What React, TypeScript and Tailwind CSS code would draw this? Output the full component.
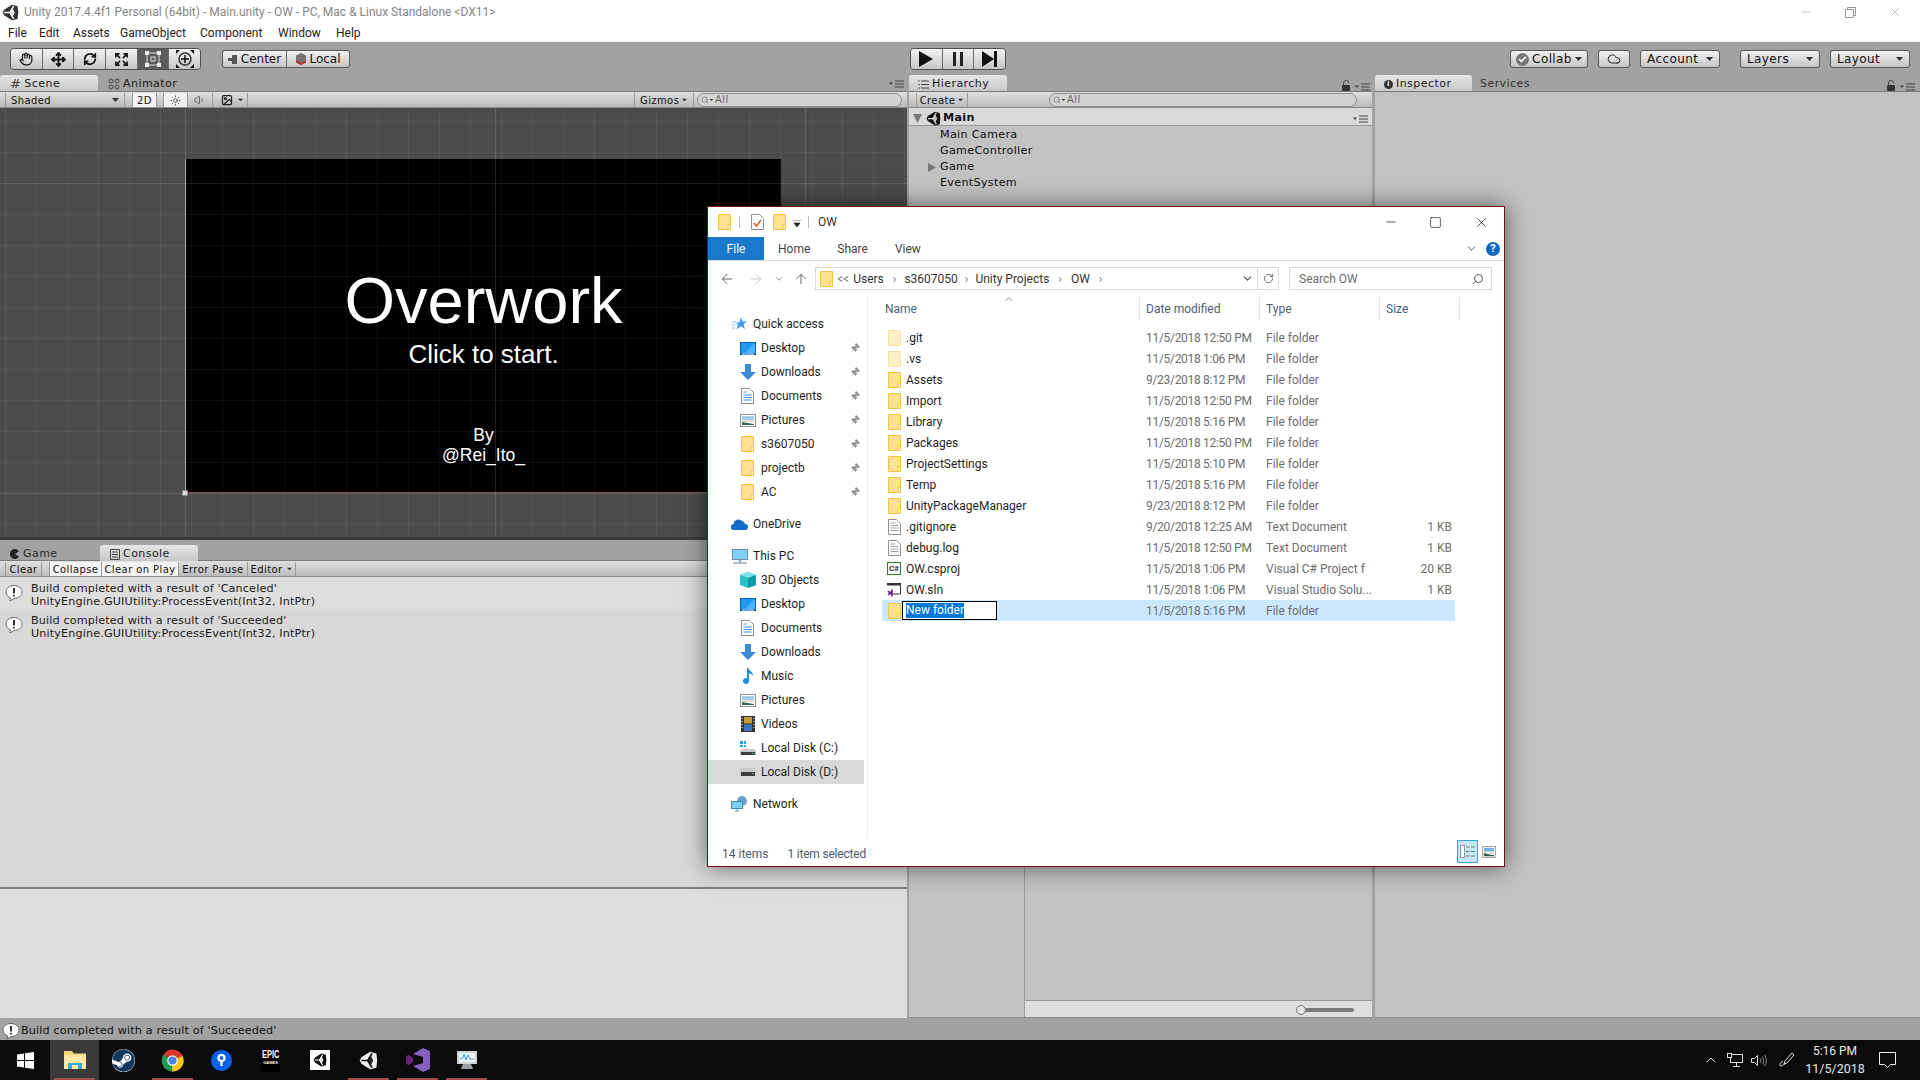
import { ReactNode } from 'react';
import { ArrowLeft, ArrowRight, ArrowUp, ChevronDown, ChevronUp, Expand, Hand, Move, RefreshCw, RotateCw, Search, Minus, Square, X, Cloud, Check, Pin, Volume1, Sun, Image } from 'lucide-react';
import { FaSteam } from 'react-icons/fa';

const Caret = ({ className = '' }: { className?: string }) => (
  <svg width="7" height="4" viewBox="0 0 7 4" className={className}><path d="M0 0h7L3.5 4z" fill="#333" /></svg>
);

const PanelMenu = () => (
  <svg width="15" height="8" viewBox="0 0 15 8">
    <path d="M0 2.5h4L2 5z" fill="#444" />
    <path d="M6 1h9M6 4h9M6 7h9" stroke="#444" strokeWidth="1" />
  </svg>
);

const PadLock = () => (
  <svg width="8" height="11" viewBox="0 0 8 11">
    <path d="M1.5 5V3a2.5 2.5 0 0 1 5 0" fill="none" stroke="#444" strokeWidth="1" />
    <rect x="0" y="5" width="8" height="6" rx="1" fill="#333" />
  </svg>
);

const UnityMark = ({ size = 16, color = '#111', cut = '#fff' }: { size?: number; color?: string; cut?: string }) => (
  <svg width={size} height={size} viewBox="0 0 24 24">
    <path d="M14 1l8 2 1 9-1 9-8 2-11-7-2-4 2-4z" fill={color} />
    <path d="M11 12L16.5 3M11 12l5.5 9M11 12H3" stroke={cut} strokeWidth="2" fill="none" />
    <path d="M11 12l4-6 3 6-3 6z" fill={cut} opacity="0.85" />
  </svg>
);

const GalleryIcon = () => (
  <svg width="14" height="12" viewBox="0 0 15 13">
    <rect x="0.5" y="0.5" width="14" height="12" fill="#fff" stroke="#9d9d9d" />
    <rect x="2" y="2" width="11" height="4" fill="#78aee8" />
    <rect x="2" y="6" width="11" height="2" fill="#cfe0cc" />
    <path d="M2 11V7.5l5 1.5 6 1v1z" fill="#2f5d49" />
  </svg>
);

const PlainDoc = () => (
  <svg width="13" height="16" viewBox="0 0 13 16">
    <path d="M.5.5h8l4 4v11H.5z" fill="#fff" stroke="#8f8f8f" />
    <path d="M2.5 4h5M2.5 6.5h8M2.5 9h8M2.5 11.500h8" stroke="#a0a0a0" />
  </svg>
);

const FolderIcon = ({ faded = false }: { faded?: boolean }) => (
  <svg width="13" height="16" viewBox="0 0 13 16" className={faded ? 'opacity-50' : ''}>
    <path d="M.5.5h12v15H.5z" fill="#fee291" stroke="#eec548" />
    <path d="M10 10.5h2.5v5H10z" fill="#fff3c4" stroke="#eec548" />
  </svg>
);

const SidebarGlyphs: Record<string, ReactNode> = {
  star: (
    <svg width="15" height="14" viewBox="0 0 15 14">
      <path d="M9 0l1.6 4.500H15l-3.500 2.800L13 12 9 9.200 4.600 12.500 6 7.500 3.500 5.500h4z" fill="#3a9bf0" />
      <path d="M0 5h4M0 8h3M0 11h3" stroke="#7fc0f4" />
    </svg>
  ),
  desktop: (
    <svg width="16" height="13" viewBox="0 0 16 13">
      <rect width="16" height="13" fill="#0a5fb5" />
      <path d="M1 1h14v10H1z" fill="#1e9bf0" />
      <path d="M15 1v10H5z" fill="#4db4f5" />
      <path d="M2 12h12" stroke="#d8ecfb" />
    </svg>
  ),
  downloads: (
    <svg width="16" height="16" viewBox="0 0 16 16">
      <path d="M5 0h6v8h5l-8 8-8-8h5z" fill="#3a8ad8" />
    </svg>
  ),
  documents: (
    <svg width="13" height="16" viewBox="0 0 13 16">
      <path d="M.5.5h8l4 4v11H.5z" fill="#fff" stroke="#8b8b8b" />
      <path d="M2.5 4h3M2.5 7h8M2.5 9.500h8M2.5 12h8" stroke="#3f87cf" />
    </svg>
  ),
  pictures: (
    <svg width="16" height="13" viewBox="0 0 16 13">
      <rect x="0.5" y="0.5" width="15" height="12" fill="#fff" stroke="#8f8f8f" />
      <rect x="2" y="2" width="12" height="4" fill="#a5cdee" />
      <rect x="2" y="6" width="12" height="2" fill="#d8e3cf" />
      <path d="M2 11V8l6 1 6 1v1z" fill="#35634f" />
    </svg>
  ),
  onedrive: (
    <svg width="17" height="12" viewBox="0 0 17 12">
      <path d="M3 12a3 3 0 0 1-.5-6A5 5 0 0 1 11 3a3.500 3.500 0 0 1 3 3 3 3 0 0 1 0 6z" fill="#0f6cc8" />
    </svg>
  ),
  pc: (
    <svg width="16" height="15" viewBox="0 0 16 15">
      <rect x="0.5" y="0.5" width="15" height="10" fill="#7fd0f7" stroke="#6b8fa6" />
      <path d="M6.5 11h3v2h-3z" fill="#9aa9b3" />
      <path d="M1 14h14" stroke="#9aa9b3" strokeWidth="1.5" />
    </svg>
  ),
  cube: (
    <svg width="16" height="16" viewBox="0 0 16 16">
      <path d="M8 0l8 3v10l-8 3-8-3V3z" fill="#27c0c8" />
      <path d="M8 0l8 3-8 3-8-3z" fill="#7be2e6" />
      <path d="M8 6l8-3v10l-8 3z" fill="#119aa8" />
    </svg>
  ),
  music: (
    <svg width="12" height="16" viewBox="0 0 12 16">
      <path d="M5 0h1.500c.5 3 5.500 4 4 8C10 6 8 5.500 7 5.500V13a3 3 0 1 1-2-2.800z" fill="#1f8fe6" />
    </svg>
  ),
  videos: (
    <svg width="14" height="16" viewBox="0 0 14 16">
      <rect width="14" height="16" fill="#333" />
      <rect x="3" y="1" width="8" height="6.5" fill="#c49a3c" />
      <rect x="3" y="8.5" width="8" height="6.5" fill="#3c74c4" />
      <path d="M1 2v1M1 5v1M1 8v1M1 11v1M13 2v1M13 5v1M13 8v1M13 11v1" stroke="#fff" />
    </svg>
  ),
  diskC: (
    <svg width="16" height="14" viewBox="0 0 16 14">
      <path d="M0 0h3v3H0zM4 0h2v3H4zM0 4h3v2H0zM4 4h2v2H4z" fill="#1ea7f0" />
      <path d="M2 8h12l2 2v4H0v-4z" fill="#c9c9c9" />
      <rect x="1" y="11" width="14" height="3" fill="#3d3d3d" />
      <rect x="12" y="12" width="1.5" height="1" fill="#5dd35d" />
    </svg>
  ),
  diskD: (
    <svg width="16" height="8" viewBox="0 0 16 8">
      <path d="M2 0h12l2 2v6H0V2z" fill="#c9c9c9" />
      <rect x="1" y="4" width="14" height="4" fill="#3d3d3d" />
      <rect x="12" y="5" width="1.5" height="1" fill="#5dd35d" />
    </svg>
  ),
  network: (
    <svg width="17" height="16" viewBox="0 0 17 16">
      <circle cx="11" cy="5" r="5" fill="#6f9fc9" />
      <rect x="0.5" y="5.5" width="11" height="7" fill="#7fd0f7" stroke="#4a86b2" />
      <path d="M4 15h4M6 13v2" stroke="#7d97a8" />
    </svg>
  ),
};

const sidebarRows = [
  { label: 'Quick access', icon: 'star', top: true },
  { label: 'Desktop', icon: 'desktop', pin: true },
  { label: 'Downloads', icon: 'downloads', pin: true },
  { label: 'Documents', icon: 'documents', pin: true },
  { label: 'Pictures', icon: 'pictures', pin: true },
  { label: 's3607050', icon: 'folder', pin: true },
  { label: 'projectb', icon: 'folder', pin: true },
  { label: 'AC', icon: 'folder', pin: true },
  { label: 'OneDrive', icon: 'onedrive', top: true, gap: true },
  { label: 'This PC', icon: 'pc', top: true, gap: true },
  { label: '3D Objects', icon: 'cube' },
  { label: 'Desktop', icon: 'desktop' },
  { label: 'Documents', icon: 'documents' },
  { label: 'Downloads', icon: 'downloads' },
  { label: 'Music', icon: 'music' },
  { label: 'Pictures', icon: 'pictures' },
  { label: 'Videos', icon: 'videos' },
  { label: 'Local Disk (C:)', icon: 'diskC' },
  { label: 'Local Disk (D:)', icon: 'diskD', selected: true },
  { label: 'Network', icon: 'network', top: true, gap: true },
];

const files = [
  { name: '.git', date: '11/5/2018 12:50 PM', type: 'File folder', size: '', icon: 'faded' },
  { name: '.vs', date: '11/5/2018 1:06 PM', type: 'File folder', size: '', icon: 'faded' },
  { name: 'Assets', date: '9/23/2018 8:12 PM', type: 'File folder', size: '', icon: 'folder' },
  { name: 'Import', date: '11/5/2018 12:50 PM', type: 'File folder', size: '', icon: 'folder' },
  { name: 'Library', date: '11/5/2018 5:16 PM', type: 'File folder', size: '', icon: 'folder' },
  { name: 'Packages', date: '11/5/2018 12:50 PM', type: 'File folder', size: '', icon: 'folder' },
  { name: 'ProjectSettings', date: '11/5/2018 5:10 PM', type: 'File folder', size: '', icon: 'folder' },
  { name: 'Temp', date: '11/5/2018 5:16 PM', type: 'File folder', size: '', icon: 'folder' },
  { name: 'UnityPackageManager', date: '9/23/2018 8:12 PM', type: 'File folder', size: '', icon: 'folder' },
  { name: '.gitignore', date: '9/20/2018 12:25 AM', type: 'Text Document', size: '1 KB', icon: 'doc' },
  { name: 'debug.log', date: '11/5/2018 12:50 PM', type: 'Text Document', size: '1 KB', icon: 'doc' },
  { name: 'OW.csproj', date: '11/5/2018 1:06 PM', type: 'Visual C# Project f', size: '20 KB', icon: 'csproj' },
  { name: 'OW.sln', date: '11/5/2018 1:06 PM', type: 'Visual Studio Solu...', size: '1 KB', icon: 'sln' },
];

const fileIcon = (kind: string) => {
  if (kind === 'faded') return <FolderIcon faded />;
  if (kind === 'folder') return <FolderIcon />;
  if (kind === 'doc') return <PlainDoc />;
  if (kind === 'csproj')
    return (
      <div className="w-[14px] h-[13px] border border-[#2f7d32] bg-white flex items-center justify-center text-[8px] leading-none font-bold text-[#333] -ml-[1px]">C#</div>
    );
  return (
    <svg width="14" height="14" viewBox="0 0 14 14" className="-ml-[1px]">
      <path d="M.5 1h13v10H6" fill="#fff" stroke="#333" />
      <rect x="0" y="0" width="14" height="2.5" fill="#333" />
      <path d="M1 8l4 4M1 12l4-4M5 6.500v7" stroke="#68217a" strokeWidth="1.6" fill="none" />
    </svg>
  );
};

const UnityButton = ({ children, className = '' }: { children: ReactNode; className?: string }) => (
  <div className={`flex items-center h-[18px] rounded-[3px] border border-[#5a5a5a] bg-linear-to-b from-[#f2f2f2] to-[#c4c4c4] text-[#111] ${className}`}>
    {children}
  </div>
);

const ToolCell = ({ children, active = false, last = false }: { children: ReactNode; active?: boolean; last?: boolean }) => (
  <div className={`flex-1 h-full flex items-center justify-center ${last ? '' : 'border-r border-[#6a6a6a]'} ${active ? 'bg-[#5c5c5c] text-white' : 'bg-linear-to-b from-[#f2f2f2] to-[#c6c6c6] text-[#111]'}`}>
    {children}
  </div>
);

const BarItem = ({ children, className = '' }: { children: ReactNode; className?: string }) => (
  <div className={`h-full flex items-center border-r border-[#9a9a9a] ${className}`}>{children}</div>
);

const SearchPill = ({ className = '' }: { className?: string }) => (
  <div className={`h-[14px] rounded-full border border-[#8f8f8f] bg-[#d4d4d4] flex items-center pl-[3px] text-[#666] text-[10px] leading-none ${className}`}>
    <Search size={8} strokeWidth={2} />
    <Caret className="scale-50 -ml-[1px]" />
    All
  </div>
);

const Toolbar = () => (
  <div className="h-[32px] flex items-start pt-[5px] pl-[10px] pr-[10px] text-[12px]">
    <div className="flex w-[191px] h-[22px] rounded-[4px] border border-[#4f4f4f] overflow-hidden">
      <ToolCell><Hand size={14} /></ToolCell>
      <ToolCell><Move size={15} strokeWidth={3} /></ToolCell>
      <ToolCell><RefreshCw size={14} strokeWidth={3} /></ToolCell>
      <ToolCell><Expand size={15} strokeWidth={2.5} /></ToolCell>
      <ToolCell active>
        <svg width="16" height="16" viewBox="0 0 16 16">
          <path d="M2 2h12v12H2z" fill="none" stroke="#ddd" />
          <path d="M0 0h4v4H0zM12 0h4v4h-4zM0 12h4v4H0zM12 12h4v4h-4z" fill="#eee" />
          <rect x="6" y="6" width="4" height="4" fill="none" stroke="#ddd" />
        </svg>
      </ToolCell>
      <ToolCell last>
        <svg width="18" height="18" viewBox="0 0 18 18">
          <circle cx="9" cy="9" r="6" fill="none" stroke="#333" strokeWidth="1.5" />
          <path d="M9 5v8M5 9h8" stroke="#111" strokeWidth="1.5" />
          <path d="M0 0h4L0 4zM18 0h-4l4 4zM0 18h4l-4-4zM18 18h-4l4-4z" fill="#111" />
        </svg>
      </ToolCell>
    </div>
    <UnityButton className="ml-[21px] mt-[2px] w-[128px]">
      <div className="w-[64px] h-full flex items-center justify-center gap-[3px] border-r border-[#6a6a6a]">
        <svg width="10" height="9" viewBox="0 0 10 9"><path d="M4 0h5v9H4zM0 3h4v3H0z" fill="#555" /></svg>
        Center
      </div>
      <div className="flex-1 h-full flex items-center justify-center gap-[2px]">
        <svg width="12" height="12" viewBox="0 0 12 12"><path d="M6 0l5 2.500v7L6 12 1 9.500v-7z" fill="#777" /><path d="M1 7l5 2.500L11 7v2.500L6 12 1 9.500z" fill="#b33c3c" /></svg>
        Local
      </div>
    </UnityButton>
    <div className="ml-[560px] flex h-[22px] w-[96px] rounded-[4px] border border-[#4f4f4f] overflow-hidden">
      <ToolCell><svg width="14" height="16" viewBox="0 0 14 16"><path d="M0 0l14 8-14 8z" fill="#111" /></svg></ToolCell>
      <ToolCell><svg width="10" height="14" viewBox="0 0 10 14"><path d="M0 0h3v14H0zM7 0h3v14H7z" fill="#222" /></svg></ToolCell>
      <ToolCell last><svg width="16" height="16" viewBox="0 0 16 16"><path d="M0 0l12 8-12 8zM12 0h3v16h-3z" fill="#111" /></svg></ToolCell>
    </div>
    <UnityButton className="ml-auto mt-[2px] w-[78px] justify-center gap-[3px] tracking-[0.4px]">
      <span className="w-[13px] h-[13px] rounded-full bg-[#777] flex items-center justify-center"><Check size={9} color="#fff" strokeWidth={4} /></span>
      Collab
      <Caret />
    </UnityButton>
    <UnityButton className="ml-[10px] mt-[2px] w-[32px] justify-center"><Cloud size={14} strokeWidth={1.5} /></UnityButton>
    <UnityButton className="ml-[10px] mt-[2px] w-[80px] justify-between px-[6px] tracking-[0.4px]">Account<Caret /></UnityButton>
    <UnityButton className="ml-[20px] mt-[2px] w-[80px] justify-between px-[6px] tracking-[0.4px]">Layers<Caret /></UnityButton>
    <UnityButton className="ml-[10px] mt-[2px] w-[80px] justify-between px-[6px] tracking-[0.4px]">Layout<Caret /></UnityButton>
  </div>
);

const Tab = ({ children, active = false, className = '' }: { children: ReactNode; active?: boolean; className?: string }) => (
  <div className={`h-[16px] pt-[2px] flex items-center gap-[3px] text-[11px] tracking-[0.45px] text-[#1a1a1a] ${active ? 'rounded-t-[3px] bg-linear-to-b from-[#e6e6e6] to-[#c8c8c8]' : ''} ${className}`}>
    {children}
  </div>
);

const SceneView = () => (
  <div className="relative h-[432px] bg-[#4b4b4b] overflow-hidden border-b-[3px] border-[#3c3c3c]">
    <div className="absolute left-[185px] top-[51px] w-[596px] h-[334px] bg-black border-l border-[#9a9a9a] border-b border-b-[#8a4a4a] flex flex-col items-center pt-[104px] text-white font-['Liberation_Sans',sans-serif]">
      <div className="text-[65px] leading-[75px]">Overwork</div>
      <div className="text-[26px] leading-[30px] mt-[1px]">Click to start.</div>
      <div className="text-[17.5px] leading-[20px] mt-[56px] text-center">By<br />@Rei_Ito_</div>
    </div>
    <div className="absolute inset-0 bg-[linear-gradient(to_right,rgba(255,255,255,0.05)_1px,transparent_1px),linear-gradient(to_bottom,rgba(255,255,255,0.05)_1px,transparent_1px)] bg-[length:31px_31px] bg-[position:5px_13px]" />
    <div className="absolute inset-0 bg-[linear-gradient(to_right,rgba(255,255,255,0.13)_1px,transparent_1px),linear-gradient(to_bottom,rgba(255,255,255,0.07)_1px,transparent_1px)] bg-[length:310px_310px] bg-[position:185px_75px]" />
    <div className="absolute left-[182px] top-[382px] w-[6px] h-[6px] border border-[#888] bg-[#ddd]" />
  </div>
);

const ConsoleIcon = () => (
  <svg width="18" height="18" viewBox="0 0 18 18">
    <path d="M9 1.500c4.500 0 8 2.800 8 6.500s-3.500 6.500-8 6.500l-4 2.500 .5-3.200C3 12.500 1 10.500 1 8c0-3.700 3.500-6.500 8-6.500z" fill="#fff" stroke="#666" />
    <path d="M9 4v5.500M9 11v1.500" stroke="#222" strokeWidth="1.8" />
  </svg>
);

const LogRow = ({ text, className }: { text: string; className: string }) => (
  <div className={`h-[32px] flex items-center pl-[5px] ${className}`}>
    <ConsoleIcon />
    <div className="ml-[8px] mt-[3px] text-[11.2px] leading-[13px] text-[#1a1a1a] tracking-[0.14px] whitespace-nowrap">
      {text}<br />UnityEngine.GUIUtility:ProcessEvent(Int32, IntPtr)
    </div>
  </div>
);

const LeftColumn = () => (
  <div className="w-[907px] flex flex-col">
    <div className="h-[17px] flex border-b border-[#7a7a7a]">
      <Tab active className="w-[98px] pl-[10px]"><span className="text-[13px] text-[#444]">#</span>Scene</Tab>
      <Tab className="ml-[10px]">
        <svg width="12" height="12" viewBox="0 0 12 12"><circle cx="3" cy="3" r="2" fill="none" stroke="#444" /><circle cx="9" cy="3" r="2" fill="none" stroke="#444" /><circle cx="3" cy="9" r="2" fill="none" stroke="#444" /><circle cx="9" cy="9" r="2" fill="none" stroke="#444" /></svg>
        Animator
      </Tab>
      <div className="ml-auto mr-[3px] mt-[5px]"><PanelMenu /></div>
    </div>
    <div className="h-[16px] pt-[1px] flex items-center bg-linear-to-b from-[#e0e0e0] to-[#b9b9b9] text-[10px] tracking-[0.4px] text-[#111] border-b border-[#8a8a8a]">
      <BarItem className="ml-[5px] w-[120px] px-[5px] justify-between border-l border-[#9a9a9a]">Shaded<Caret /></BarItem>
      <BarItem className="ml-[7px] w-[25px] justify-center bg-[#f4f4f4] border-l">2D</BarItem>
      <BarItem className="ml-[6px] w-[25px] justify-center bg-[#f0f0f0] border-l"><Sun size={11} color="#555" /></BarItem>
      <BarItem className="w-[25px] justify-center"><Volume1 size={12} color="#666" /></BarItem>
      <BarItem className="w-[35px] pl-[8px] gap-[4px]"><Image size={12} color="#222" strokeWidth={2.5} /><Caret className="scale-75" /></BarItem>
      <BarItem className="ml-auto w-[60px] justify-between px-[5px] border-l">Gizmos<Caret className="scale-75" /></BarItem>
      <SearchPill className="ml-[3px] mr-[5px] w-[205px]" />
    </div>
    <SceneView />
    <div className="h-[21px] pt-[5px] flex border-b border-[#7a7a7a]">
      <Tab className="w-[100px] pl-[10px] text-[#2a2a2a]">
        <svg width="10" height="10" viewBox="0 0 10 10"><path d="M9 2.200A5 5 0 1 0 9 7.800L5 5z" fill="#222" /></svg>
        Game
      </Tab>
      <Tab active className="w-[98px] pl-[10px]">
        <svg width="10" height="11" viewBox="0 0 10 11"><path d="M.5.5h9v10h-9zM2 3h6M2 5.500h6M2 8h6" fill="none" stroke="#444" /></svg>
        Console
      </Tab>
    </div>
    <div className="h-[16px] pt-[1px] flex items-center bg-linear-to-b from-[#e0e0e0] to-[#bcbcbc] text-[10px] tracking-[0.4px] text-[#111] border-b border-[#8a8a8a]">
      <BarItem className="ml-[5px] w-[37px] justify-center border-l">Clear</BarItem>
      <BarItem className="ml-[7px] w-[53px] justify-center bg-[#f4f4f4] border-l">Collapse</BarItem>
      <BarItem className="w-[77px] justify-center bg-[#f4f4f4]">Clear on Play</BarItem>
      <BarItem className="w-[69px] justify-center">Error Pause</BarItem>
      <BarItem className="w-[48px] justify-center gap-[3px]">Editor<Caret className="scale-75" /></BarItem>
    </div>
    <div className="flex-1 bg-[#d8d8d8]">
      <LogRow text="Build completed with a result of 'Canceled'" className="bg-[#dedede]" />
      <LogRow text="Build completed with a result of 'Succeeded'" className="bg-[#d8d8d8]" />
    </div>
    <div className="h-[131px] bg-[#dedede] border-t-2 border-[#7f7f7f]" />
  </div>
);

const MiddleColumn = () => (
  <div className="w-[463px] ml-[2px] flex flex-col">
    <div className="h-[17px] flex border-b border-[#7a7a7a]">
      <Tab active className="w-[98px] pl-[9px]">
        <svg width="11" height="9" viewBox="0 0 11 9"><path d="M3 1h8M3 4.500h8M3 8h8" stroke="#444" /><path d="M0 1h1.500M.5 4.500H2M.5 8H2" stroke="#444" /></svg>
        Hierarchy
      </Tab>
      <div className="ml-auto mr-[2px] mt-[4px] flex items-end gap-[5px]"><PadLock /><PanelMenu /></div>
    </div>
    <div className="h-[16px] pt-[1px] flex items-center bg-linear-to-b from-[#e0e0e0] to-[#b9b9b9] text-[10px] tracking-[0.4px] text-[#111] border-b border-[#8a8a8a]">
      <BarItem className="ml-[7px] w-[52px] justify-center gap-[2px] border-l">Create<Caret className="scale-75" /></BarItem>
      <SearchPill className="ml-[81px] w-[308px]" />
    </div>
    <div className="flex-1 bg-[#c2c2c2] flex flex-col text-[11.2px] tracking-[0.3px] text-[#111]">
      <div className="h-[18px] bg-[#d9d9d9] border-b border-[#9a9a9a] flex items-center pl-[4px] pt-[4px] font-bold">
        <svg width="9" height="9" viewBox="0 0 9 9"><path d="M0 0h9L4.500 9z" fill="#777" /></svg>
        <span className="ml-[4px] mr-[2px]"><UnityMark size={15} color="#111" cut="#d9d9d9" /></span>
        Main
        <div className="ml-auto mr-[4px]"><PanelMenu /></div>
      </div>
      <div className="h-[16px] mt-[1px] leading-[16px] pl-[31px]">Main Camera</div>
      <div className="h-[16px] leading-[16px] pl-[31px]">GameController</div>
      <div className="h-[16px] leading-[16px] pl-[19px] flex items-center gap-[4px]">
        <svg width="8" height="9" viewBox="0 0 8 9"><path d="M0 0l8 4.500L0 9z" fill="#777" /></svg>
        Game
      </div>
      <div className="h-[16px] leading-[16px] pl-[31px]">EventSystem</div>
    </div>
    <div className="h-[400px] mt-[2px] flex border-b border-[#8a8a8a]">
      <div className="w-[116px] bg-[#c2c2c2] border-r border-[#9a9a9a]" />
      <div className="flex-1 flex flex-col bg-[#c2c2c2]">
        <div className="flex-1" />
        <div className="h-[17px] pt-[1px] bg-[#dedede] border-t border-[#9a9a9a] flex items-center pl-[274px]">
          <div className="relative w-[55px] h-[4px] rounded-full bg-[#7a7a7a]">
            <div className="absolute -left-[3px] -top-[3px] w-[10px] h-[10px] rounded-full border border-[#777] bg-[#e4e4e4]" />
          </div>
        </div>
      </div>
    </div>
  </div>
);

const InspectorColumn = () => (
  <div className="flex-1 ml-[3px] flex flex-col">
    <div className="h-[17px] flex border-b border-[#7a7a7a]">
      <Tab active className="w-[97px] pl-[9px]">
        <span className="w-[9px] h-[9px] rounded-full bg-[#333] text-white text-[7px] leading-[9px] text-center font-bold">i</span>
        Inspector
      </Tab>
      <Tab className="ml-[8px] text-[#333]">Services</Tab>
      <div className="ml-auto mr-[5px] mt-[4px] flex items-end gap-[5px]"><PadLock /><PanelMenu /></div>
    </div>
    <div className="flex-1 bg-[#c2c2c2] border-b border-[#8a8a8a]" />
  </div>
);

const ExplorerWindow = () => (
  <div className="absolute left-[707px] top-[206px] w-[798px] h-[661px] bg-white border border-[#6e1414] shadow-[0_0_22px_rgba(0,0,0,0.55)] flex flex-col font-['Roboto',sans-serif] text-[12px] text-[#1e1e1e]">
    <div className="h-[30px] flex items-center pl-[10px] shrink-0">
      <FolderIcon />
      <div className="ml-[8px] w-px h-[12px] bg-[#bdbdbd]" />
      <svg width="13" height="16" viewBox="0 0 13 16" className="ml-[11px]">
        <path d="M.5.5h8l4 4v11H.5z" fill="#fff" stroke="#8f8f8f" />
        <path d="M3 9l2.500 3L10 6" fill="none" stroke="#e0562a" strokeWidth="1.5" />
      </svg>
      <div className="ml-[9px]"><FolderIcon /></div>
      <svg width="8" height="8" viewBox="0 0 8 8" className="ml-[7px] mt-[3px]"><path d="M0 0h8M1 3h6L4 7z" fill="#222" stroke="#222" strokeWidth="0.7" /></svg>
      <div className="ml-[7px] w-px h-[12px] bg-[#bdbdbd]" />
      <span className="ml-[9px] text-[#333]">OW</span>
      <Minus size={14} strokeWidth={1.2} color="#111" className="ml-auto" />
      <Square size={13} strokeWidth={1.2} color="#111" className="ml-[31px]" />
      <X size={15} strokeWidth={1.2} color="#111" className="ml-[32px] mr-[15px]" />
    </div>
    <div className="h-[24px] flex items-center border-b border-[#dadada] shrink-0 text-[#444]">
      <div className="w-[56px] h-full bg-[#1979ca] text-white flex items-center justify-center">File</div>
      <span className="ml-[14px]">Home</span>
      <span className="ml-[27px]">Share</span>
      <span className="ml-[27px]">View</span>
      <ChevronDown size={13} color="#999" className="ml-auto" />
      <span className="ml-[8px] mr-[4px] w-[14px] h-[14px] rounded-full bg-[#1168c4] text-white text-[11px] leading-[14px] text-center font-bold">?</span>
    </div>
    <div className="h-[35px] flex items-center shrink-0 pl-[11px]">
      <ArrowLeft size={16} color="#666" strokeWidth={1.5} />
      <ArrowRight size={16} color="#ccc" strokeWidth={1.5} className="ml-[13px]" />
      <ChevronDown size={10} color="#777" strokeWidth={2} className="ml-[10px]" />
      <ArrowUp size={16} color="#666" strokeWidth={1.5} className="ml-[9px]" />
      <div className="ml-[6px] w-[464px] h-[23px] border border-[#d9d9d9] flex items-center pl-[4px] text-[#333]">
        <FolderIcon />
        <span className="ml-[4px] text-[#777]">&lt;&lt;</span>
        <span className="ml-[4px]">Users</span>
        <span className="ml-[9px] text-[#777]">›</span>
        <span className="ml-[8px]">s3607050</span>
        <span className="ml-[7px] text-[#777]">›</span>
        <span className="ml-[7px]">Unity Projects</span>
        <span className="ml-[9px] text-[#777]">›</span>
        <span className="ml-[9px]">OW</span>
        <span className="ml-[9px] text-[#777]">›</span>
        <ChevronDown size={13} color="#555" strokeWidth={2} className="ml-auto mr-[3px]" />
        <div className="w-[21px] h-full border-l border-[#d9d9d9] flex items-center justify-center"><RotateCw size={11} color="#666" /></div>
      </div>
      <div className="ml-[10px] w-[203px] h-[23px] border border-[#d9d9d9] flex items-center pl-[9px] pr-[7px] text-[#6d6d6d]">
        Search OW
        <Search size={12} color="#555" strokeWidth={2} className="ml-auto -scale-x-100" />
      </div>
    </div>
    <div className="flex-1 flex min-h-0">
      <div className="w-[160px] border-r border-[#efefef] pt-[16px] shrink-0">
        {sidebarRows.map((row) => (
          <div
            key={row.label + row.icon}
            className={`h-[24px] flex items-center w-[156px] ${row.gap ? 'mt-[8px]' : ''} ${row.selected ? 'bg-[#d9d9d9]' : ''} ${row.top ? 'pl-[23px]' : 'pl-[31px]'}`}
          >
            <div className="w-[17px] flex justify-center shrink-0">
              {row.icon === 'folder' ? <FolderIcon /> : SidebarGlyphs[row.icon]}
            </div>
            <span className="ml-[5px]">{row.label}</span>
            {row.pin && <Pin size={10} color="#9a9a9a" fill="#9a9a9a" className="ml-auto mr-[4px] rotate-45" />}
          </div>
        ))}
      </div>
      <div className="flex-1 pl-[14px]">
        <div className="relative grid grid-cols-[258px_120px_120px_80px] w-[578px] h-[24px] pt-[1px] text-[#4c607a]">
          <div className="pl-[3px] flex items-center border-r border-[#e5e5e5]">Name</div>
          <div className="pl-[6px] flex items-center border-r border-[#e5e5e5]">Date modified</div>
          <div className="pl-[6px] flex items-center border-r border-[#e5e5e5]">Type</div>
          <div className="pl-[6px] flex items-center border-r border-[#e5e5e5]">Size</div>
          <ChevronUp size={12} color="#888" className="absolute left-[121px] -top-[3px]" />
        </div>
        <div className="pt-[7px]">
          {files.map((f) => (
            <div key={f.name} className="grid grid-cols-[258px_120px_120px_75px] w-[573px] h-[21px] items-center">
              <div className="pl-[6px] flex items-center">
                <div className="w-[13px] flex justify-center">{fileIcon(f.icon)}</div>
                <span className="ml-[5px]">{f.name}</span>
              </div>
              <div className="pl-[6px] text-[#6d6d6d] tracking-[-0.3px]">{f.date}</div>
              <div className="pl-[6px] text-[#6d6d6d]">{f.type}</div>
              <div className="pr-[3px] text-right text-[#6d6d6d]">{f.size}</div>
            </div>
          ))}
          <div className="grid grid-cols-[258px_120px_120px_75px] w-[573px] h-[21px] items-center bg-[#cce8ff]">
            <div className="pl-[6px] flex items-center">
              <div className="w-[13px] flex justify-center"><FolderIcon /></div>
              <div className="ml-[1px] w-[95px] h-[19px] border border-black bg-white flex items-center pl-[3px]">
                <span className="bg-[#0078d7] text-white leading-[15px]">New folder</span>
              </div>
            </div>
            <div className="pl-[6px] text-[#6d6d6d] tracking-[-0.3px]">11/5/2018 5:16 PM</div>
            <div className="pl-[6px] text-[#6d6d6d]">File folder</div>
          </div>
        </div>
      </div>
    </div>
    <div className="h-[27px] shrink-0 flex items-center pl-[14px] pt-[3px] text-[#4c5a6e]">
      <span>14 items</span>
      <span className="ml-[19px] tracking-[-0.2px]">1 item selected</span>
      <div className="ml-auto w-[21px] h-[23px] mr-[4px] mt-[-5px] border border-[#3aa0dc] bg-[#c6e6f8] flex items-center justify-center">
        <svg width="15" height="13" viewBox="0 0 15 13">
          <rect x="0.5" y="0.5" width="4" height="12" fill="#fff" stroke="#999" />
          <path d="M6 2h3.500M11 2h4M6 6.500h3.500M11 6.500h4M6 11h3.500M11 11h4" stroke="#777" strokeWidth="1.2" />
        </svg>
      </div>
      <div className="mr-[8px] mt-[-5px]"><GalleryIcon /></div>
    </div>
  </div>
);

const TaskSlot = ({ children, running = false, active = false }: { children: ReactNode; running?: boolean; active?: boolean }) => (
  <div className={`relative w-[49px] h-full flex items-center justify-center ${active ? 'bg-[#3a3a3a]' : ''}`}>
    {children}
    {running && <div className="absolute bottom-0 left-[4px] right-[4px] h-[2px] bg-[#a14c4c]" />}
  </div>
);

const Taskbar = () => (
  <div className="h-[40px] bg-[#0b0b0b] flex text-white">
    <div className="w-[50px] flex items-center justify-center">
      <svg width="17" height="17" viewBox="0 0 17 17"><path d="M0 2.500L7 1.500V8H0zM8 1.300L17 0v8H8zM0 9h7v6.500L0 14.500zM8 9h9v8L8 15.700z" fill="#fff" /></svg>
    </div>
    <TaskSlot active running>
      <svg width="22" height="18" viewBox="0 0 22 18">
        <path d="M0 0h8l2 2.500h12V18H0z" fill="#f7d774" />
        <path d="M0 4h22v14H0z" fill="#fde9a4" />
        <path d="M4 12h14v6H4z" fill="#38a9df" />
        <path d="M8 14h6v4H8z" fill="#fde9a4" />
      </svg>
    </TaskSlot>
    <TaskSlot>
      <div className="relative w-[23px] h-[23px] rounded-full bg-white">
        <FaSteam size={23} color="#12375e" className="absolute inset-0" />
      </div>
    </TaskSlot>
    <TaskSlot running>
      <svg width="23" height="23" viewBox="0 0 24 24">
        <path d="M12 12L2.500 6A11.500 11.500 0 0 1 22.500 7z" fill="#d9372c" />
        <path d="M12 12l10.500-5A11.500 11.500 0 0 1 11 23.500z" fill="#f5c518" />
        <path d="M12 12l-1 11.500A11.500 11.500 0 0 1 2.500 6z" fill="#1f9e50" />
        <circle cx="12" cy="12" r="5.5" fill="#fff" />
        <circle cx="12" cy="12" r="4.3" fill="#4a87ea" />
      </svg>
    </TaskSlot>
    <TaskSlot>
      <div className="w-[21px] h-[21px] rounded-full bg-[#0b62ea] flex items-center justify-center">
        <svg width="9" height="12" viewBox="0 0 9 12"><circle cx="4.5" cy="4" r="3" fill="none" stroke="#fff" strokeWidth="2.2" /><path d="M4.5 7v5" stroke="#fff" strokeWidth="2.2" /></svg>
      </div>
    </TaskSlot>
    <TaskSlot>
      <div className="w-[19px] h-[24px] bg-black rounded-[2px] flex flex-col items-center pt-[2px] font-['Liberation_Sans',sans-serif] font-bold leading-none text-white">
        <span className="text-[10px] scale-x-75">EPIC</span>
        <span className="text-[4px] mt-[1px]">GAMES</span>
      </div>
    </TaskSlot>
    <TaskSlot>
      <div className="w-[20px] h-[20px] bg-white flex items-center justify-center"><UnityMark size={14} color="#111" cut="#fff" /></div>
    </TaskSlot>
    <TaskSlot running><UnityMark size={19} color="#eee" cut="#0b0b0b" /></TaskSlot>
    <TaskSlot running>
      <svg width="24" height="24" viewBox="0 0 24 24">
        <path d="M17 0l7 3v18l-7 3-10-6 10-3V9L7 6z" fill="#865fc5" />
        <path d="M0 8l3-1 4 3 0 4-4 3-3-1z" fill="#68217a" />
        <path d="M7 10l3 2-3 2z" fill="#0b0b0b" />
      </svg>
    </TaskSlot>
    <TaskSlot running>
      <svg width="24" height="22" viewBox="0 0 24 22">
        <path d="M2 2h20v13H2z" fill="#cfd4d8" />
        <path d="M4 4h16v9H4z" fill="#eef3f6" />
        <path d="M5 10l3-1 1-4 2 6 2-5 2 4 4 0" fill="none" stroke="#45a0d8" />
        <path d="M8 15h8l2 5H6z" fill="#9aa0a4" />
      </svg>
    </TaskSlot>
    <div className="ml-auto flex items-center">
      <ChevronUp size={16} color="#ddd" strokeWidth={1.5} />
      <svg width="16" height="14" viewBox="0 0 16 14" className="ml-[8px]">
        <rect x="3.5" y="1.5" width="12" height="8" fill="none" stroke="#ddd" />
        <rect x="0.5" y="0.5" width="4" height="4" fill="#0b0b0b" stroke="#ddd" />
        <path d="M9.5 10v3M6 13.500h7" stroke="#ddd" />
      </svg>
      <svg width="16" height="13" viewBox="0 0 16 13" className="ml-[8px]">
        <path d="M.5 4.500h3l3-3v10l-3-3h-3z" fill="none" stroke="#ddd" />
        <path d="M9 4a4 4 0 0 1 0 5M11.500 2.500a7 7 0 0 1 0 8M13.500 1a9.500 9.500 0 0 1 0 11" fill="none" stroke="#888" />
      </svg>
      <svg width="16" height="16" viewBox="0 0 16 16" className="ml-[12px]">
        <path d="M13 1l2 2-7 8-3 1 1-3zM4 9c-3 1-4 5-2 5s2-2 4-2" fill="none" stroke="#ddd" />
      </svg>
      <div className="w-[78px] ml-[1px] text-center leading-[17px] text-[#e8e8e8] font-['Roboto',sans-serif]">
        <div className="text-[12px]">5:16 PM</div>
        <div className="text-[12.5px]">11/5/2018</div>
      </div>
      <svg width="17" height="16" viewBox="0 0 17 16" className="ml-[5px] mr-[24px]">
        <path d="M.5.5h16v12h-5l-3 3-3-3h-5z" fill="none" stroke="#eee" />
      </svg>
    </div>
  </div>
);

export default function App() {
  return (
    <div className="relative w-[1920px] h-[1080px] overflow-hidden flex flex-col bg-[#a2a2a2] font-['DejaVu_Sans',sans-serif] text-[11px]">
      <div className="h-[24px] bg-white flex items-center pl-[2px] font-['Roboto',sans-serif] text-[12px] text-[#858585]">
        <UnityMark size={17} color="#333" cut="#fff" />
        <span className="ml-[5px]">Unity 2017.4.4f1 Personal (64bit) - Main.unity - OW - PC, Mac &amp; Linux Standalone &lt;DX11&gt;</span>
        <Minus size={14} strokeWidth={1} color="#999" className="ml-auto" />
        <svg width="11" height="11" viewBox="0 0 11 11" className="ml-[32px]"><path d="M.5 2.500h8v8h-8zM2.500 2.500v-2h8v8h-2" fill="none" stroke="#999" /></svg>
        <X size={14} strokeWidth={1} color="#999" className="ml-[32px] mr-[18px]" />
      </div>
      <div className="h-[18px] bg-white grid grid-cols-[31px_34px_47px_80px_78px_58px_auto] items-center pl-[8px] font-['Roboto',sans-serif] text-[12px] text-[#222] border-b border-[#efefef]">
        {['File', 'Edit', 'Assets', 'GameObject', 'Component', 'Window', 'Help'].map((m) => (
          <span key={m}>{m}</span>
        ))}
      </div>
      <div className="h-px" />
      <Toolbar />
      <div className="flex-1 flex min-h-0">
        <LeftColumn />
        <MiddleColumn />
        <InspectorColumn />
      </div>
      <div className="h-[22px] pt-[4px] flex items-center pl-[2px] text-[11.2px] tracking-[0.14px] text-[#111]">
        <ConsoleIcon />
        <span className="ml-[1px]">Build completed with a result of 'Succeeded'</span>
      </div>
      <Taskbar />
      <ExplorerWindow />
    </div>
  );
}
